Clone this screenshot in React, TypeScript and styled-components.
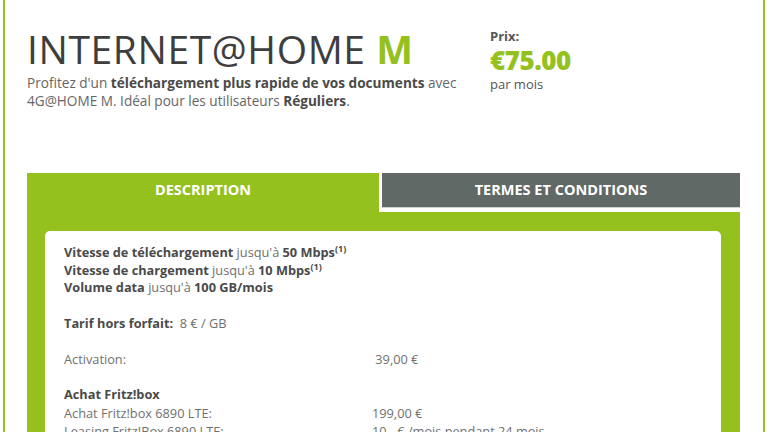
import React from "react";
import styled, { createGlobalStyle } from "styled-components";

const GREEN = "#95c11f";
const GRAY_TAB = "#616967";

const Global = createGlobalStyle`
  html, body { margin: 0; padding: 0; background: #fff; }
  body { font-family: "Open Sans", "Liberation Sans", sans-serif; }
`;

const Frame = styled.div`
  margin: 0 5px 0 3px;
  border-left: 2px solid ${GREEN};
  border-right: 2px solid ${GREEN};
  padding: 26px 23px 0 22px;
  min-height: 432px;
  box-sizing: border-box;
`;

const Header = styled.div`
  display: flex;
  align-items: flex-start;
`;

const Intro = styled.div`
  width: 463px;
`;

const Title = styled.h1`
  margin: 0 0 2px;
  font-size: 39px;
  line-height: 46px;
  font-weight: 400;
  color: #3e3e3e;
  letter-spacing: 0.6px;
`;

const TitleAccent = styled.span`
  color: ${GREEN};
  font-weight: 700;
  letter-spacing: 0;
`;

const Lead = styled.p`
  margin: 0;
  font-size: 13.6px;
  line-height: 18px;
  color: #666;
`;

const Strong = styled.b`
  font-weight: 700;
  color: #4a4a4a;
`;

const Price = styled.div`
  display: flex;
  flex-direction: column;
  padding-top: 1px;
`;

const PriceLabel = styled.span`
  font-size: 13px;
  line-height: 18px;
  font-weight: 700;
  color: #555;
`;

const PriceValue = styled.span`
  font-size: 26px;
  line-height: 30px;
  font-weight: 800;
  color: ${GREEN};
  letter-spacing: -0.5px;
`;

const PriceUnit = styled.span`
  font-size: 13px;
  line-height: 18px;
  color: #555;
`;

const Tabs = styled.div`
  margin-top: 63px;
  display: grid;
  grid-template-columns: 352px 1fr;
  column-gap: 3px;
`;

const Tab = styled.div<{ $active?: boolean }>`
  height: ${(p) => (p.$active ? "39px" : "35px")};
  background: ${(p) => (p.$active ? GREEN : GRAY_TAB)};
  color: #fff;
  font-size: 14.5px;
  font-weight: 700;
  display: flex;
  align-items: flex-start;
  justify-content: center;
  padding-top: 7px;
  box-sizing: border-box;
  ${(p) => (p.$active ? "" : "border-bottom: 1px solid #cfd2d1;")}
`;

const Panel = styled.div`
  background: ${GREEN};
  padding: 19px 19px 40px 18px;
`;

const Card = styled.div`
  background: #fff;
  border-radius: 5px;
  padding: 13px 19px 20px 19px;
  font-size: 12.75px;
  line-height: 17.5px;
  color: #707070;
`;

const Line = styled.div``;

const Sup = styled.sup`
  font-size: 9px;
  font-weight: 700;
  color: #4a4a4a;
  line-height: 0;
`;

const Block = styled.div`
  margin-top: 18px;
`;

const Row = styled.div`
  display: grid;
  grid-template-columns: 308px 1fr;
  line-height: 18px;
`;

export default function App() {
  return (
    <>
      <Global />
      <Frame>
        <Header>
          <Intro>
            <Title>
              INTERNET@HOME <TitleAccent>M</TitleAccent>
            </Title>
            <Lead>
              Profitez d'un <Strong>téléchargement plus rapide de vos documents</Strong> avec
              4G@HOME M. Idéal pour les utilisateurs <Strong>Réguliers</Strong>.
            </Lead>
          </Intro>
          <Price>
            <PriceLabel>Prix:</PriceLabel>
            <PriceValue>€75.00</PriceValue>
            <PriceUnit>par mois</PriceUnit>
          </Price>
        </Header>
        <Tabs>
          <Tab $active>DESCRIPTION</Tab>
          <Tab>TERMES ET CONDITIONS</Tab>
        </Tabs>
        <Panel>
          <Card>
            <Line>
              <Strong>Vitesse de téléchargement</Strong> jusqu'à <Strong>50 Mbps</Strong>
              <Sup>(1)</Sup>
            </Line>
            <Line>
              <Strong>Vitesse de chargement</Strong> jusqu'à <Strong>10 Mbps</Strong>
              <Sup>(1)</Sup>
            </Line>
            <Line>
              <Strong>Volume data</Strong> jusqu'à <Strong>100 GB/mois</Strong>
            </Line>
            <Block>
              <Line>
                <Strong>Tarif hors forfait:</Strong>&nbsp; 8 € / GB
              </Line>
            </Block>
            <Block>
              <Row>
                <span>Activation:</span>
                <span>&nbsp;39,00 €</span>
              </Row>
            </Block>
            <Block>
              <Line>
                <Strong>Achat Fritz!box</Strong>
              </Line>
              <Row>
                <span>Achat Fritz!box 6890 LTE:</span>
                <span>199,00 €</span>
              </Row>
              <Row>
                <span>Leasing Fritz!Box 6890 LTE:</span>
                <span>10,- € /mois pendant 24 mois</span>
              </Row>
            </Block>
          </Card>
        </Panel>
      </Frame>
    </>
  );
}
